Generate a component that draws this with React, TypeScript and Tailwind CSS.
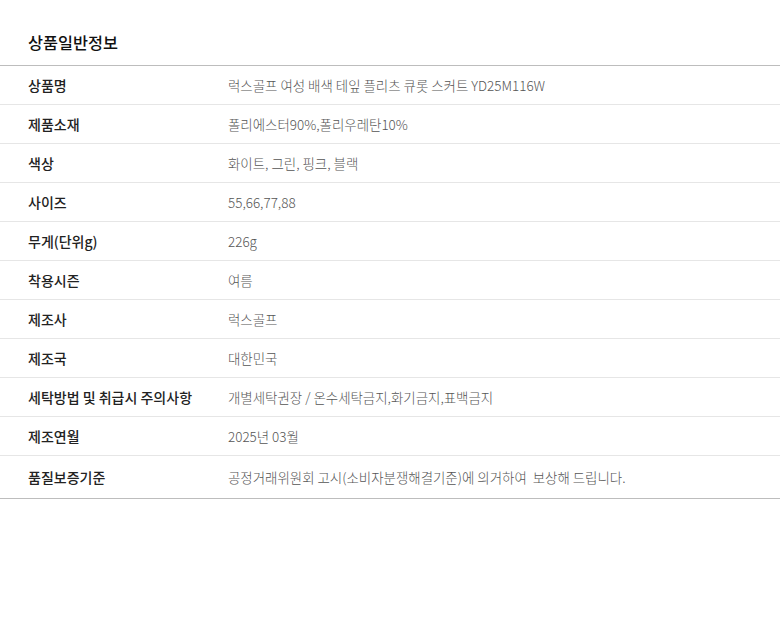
const rows: [string, string][] = [
  ["상품명", "럭스골프 여성 배색 테잎 플리츠 큐롯 스커트 YD25M116W"],
  ["제품소재", "폴리에스터90%,폴리우레탄10%"],
  ["색상", "화이트, 그린, 핑크, 블랙"],
  ["사이즈", "55,66,77,88"],
  ["무게(단위g)", "226g"],
  ["착용시즌", "여름"],
  ["제조사", "럭스골프"],
  ["제조국", "대한민국"],
  ["세탁방법 및 취급시 주의사항", "개별세탁권장 / 온수세탁금지,화기금지,표백금지"],
  ["제조연월", "2025년 03월"],
  ["품질보증기준", "공정거래위원회 고시(소비자분쟁해결기준)에 의거하여  보상해 드립니다."],
];

export default function App() {
  return (
    <div
      className="w-[780px] h-[635px] bg-white"
      style={{ fontFamily: '"Noto Sans CJK KR", "Noto Sans", sans-serif' }}
    >
      <h2 className="pt-[34px] pb-[14px] pl-[28px] text-[16.3px] leading-[17px] font-medium text-[#111]">
        상품일반정보
      </h2>
      <div className="border-t border-b border-[#bdbdbd]">
        {rows.map(([label, value], i) => (
          <div
            key={label}
            className={
              i === rows.length - 1
                ? "flex items-center h-[42px]"
                : "flex items-center h-[39px] border-b border-[#e6e6e6]"
            }
          >
            <div className="w-[228px] pl-[28px] text-[14px] font-medium text-[#222]">{label}</div>
            <div className="text-[13.45px] font-light text-[#555] whitespace-pre">{value}</div>
          </div>
        ))}
      </div>
    </div>
  );
}
